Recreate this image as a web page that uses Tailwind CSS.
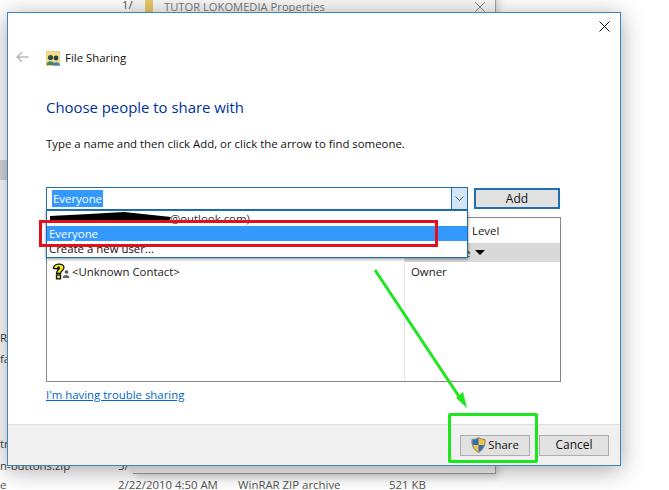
<!DOCTYPE html>
<html lang="en">
<head>
    <meta charset="UTF-8">
    <title>File Sharing</title>
    <script src="https://cdn.jsdelivr.net/npm/@tailwindcss/browser@4"></script>
</head>
<body class="bg-white">
<div class="relative w-[669px] h-[490px] overflow-hidden bg-white font-['Open_Sans','Noto_Sans',sans-serif] text-[11.4px] text-[#1a1a1a]">

    <!-- explorer behind -->
    <div class="absolute left-0 top-[160px] w-[7px] h-[20px] bg-[#d9d9d9]"></div>
    <span class="absolute left-[-3px] top-[329px] text-[#444]">.R</span>
    <span class="absolute left-0 top-[350px] text-[#444]">fa</span>
    <span class="absolute left-0 top-[435px] text-[#444]">tr</span>
    <span class="absolute left-0 top-[457px] text-[#444]">n-buttons.zip</span>
    <span class="absolute left-[118px] top-[457px] text-[#555]">3/</span>
    <span class="absolute left-0 top-[476px] text-[#555]">e</span>
    <span class="absolute left-[118px] top-[476px] text-[#555]">2/22/2010 4:50 AM</span>
    <span class="absolute left-[238px] top-[476px] text-[#555]">WinRAR ZIP archive</span>
    <span class="absolute left-[389px] top-[476px] text-[#555]">521 KB</span>
    <span class="absolute left-[122px] top-[-4px] text-[#555]">1/1</span>

    <!-- properties window behind -->
    <div class="absolute left-[133px] top-[-10px] w-[363px] h-[484px] bg-[#f6f6f6] border-r border-b border-[#a0a0a0] shadow-[2px_2px_8px_rgba(0,0,0,0.2)]">
        <div class="absolute left-[12px] top-[10px] w-[8px] h-[12px] bg-[#e8c766]"></div>
        <span class="absolute left-[31px] top-[9px] text-[#777] text-[11.2px]">TUTOR LOKOMEDIA Properties</span>
        <svg class="absolute left-[341px] top-[11px]" width="12" height="12" viewBox="0 0 12 12" fill="none" stroke="#888" stroke-width="1"><path d="M1 1l10 10M11 1L1 11"/></svg>
    </div>

    <!-- dialog -->
    <div class="absolute left-[7px] top-[12px] w-[614px] h-[454px] flex flex-col bg-white border border-[#3d85c0] shadow-[0_4px_22px_rgba(0,0,0,0.35)]">
        <div class="flex-1 relative px-[38px]">
            <svg class="absolute right-[10px] top-[8px]" width="11" height="11" viewBox="0 0 11 11" fill="none" stroke="#111" stroke-width="1"><path d="M0.5 0.5l10 10M10.5 0.5l-10 10"/></svg>
            <div class="flex items-center h-[20px] mt-[35px]">
                <svg class="absolute left-[8px] top-[38px]" width="13" height="12" viewBox="0 0 13 12" fill="none" stroke="#b9b9b9" stroke-width="1.6"><path d="M12.5 6H1.5M6 1.2L1.2 6 6 10.800"/></svg>
                <svg width="14" height="15" viewBox="0 0 14 15" class="mr-[5px]">
                    <rect width="14" height="15" fill="#f5dc8e" stroke="#d9bb62" stroke-width="0.6"/>
                    <circle cx="4.500" cy="6.500" r="2.600" fill="#2f4f3f"/>
                    <path d="M0.500 14c0-5 8-5 8 0z" fill="#3e8a67"/>
                    <circle cx="10" cy="7" r="2.400" fill="#263f47"/>
                    <path d="M6.500 14.500c0-4.500 7.500-4.500 7.500 0z" fill="#3f7fb5"/>
                </svg>
                <span class="text-[#111]">File Sharing</span>
            </div>
            <h1 class="mt-[29px] text-[14.9px] leading-[20px] text-[#003399]">Choose people to share with</h1>
            <p class="mt-[19px] leading-[16px] text-[#111]">Type a name and then click Add, or click the arrow to find someone.</p>

            <div class="flex mt-[35px] items-center">
                <div class="w-[422px] h-[23px] border border-[#1f6fb0] flex items-center pl-[5px] justify-between">
                    <span class="bg-[#3399ff] text-white leading-[17px] px-px">Everyone</span>
                    <span class="w-[16px] h-full bg-[#d4e6f5] border-l border-[#1f6fb0] flex items-center justify-center">
                        <svg width="9" height="6" viewBox="0 0 9 6" fill="none" stroke="#555" stroke-width="1"><path d="M0.500 0.500l4 4 4-4"/></svg>
                    </span>
                </div>
                <button class="ml-[6px] w-[86px] h-[21px] bg-[#e1e1e1] border-2 border-[#1f6fb0] text-[#111] text-[12px]">Add</button>
            </div>

            <div class="relative w-[515px] h-[165px] mt-[7px] border border-[#828790]">
                <div class="absolute left-[357px] top-0 bottom-0 w-px bg-[#e5e5e5]"></div>
                <div class="absolute left-[358px] right-0 top-[25px] h-[19px] bg-[#d9d9d9]"></div>
                <span class="absolute left-[425px] top-[4px]">Level</span>
                <span class="absolute left-[417px] top-[26px]">e</span>
                <span class="absolute left-[428px] top-[32px] w-0 h-0 border-x-[5px] border-x-transparent border-t-[5px] border-t-black"></span>
                <div class="absolute left-[5px] top-[45px] flex items-center">
                    <svg width="19" height="17" viewBox="0 0 19 17">
                        <path d="M1.500 5.500C1.500 0 12 -0.500 12 4.500 12 7.500 8.500 8 8.500 10.500H4.500C4.500 7 7.500 6.500 7.500 5 7.500 3.800 5.500 3.800 5.500 6z" fill="#f7ea1e" stroke="#111" stroke-width="1.300"/>
                        <rect x="4.500" y="12" width="4" height="3.800" fill="#f7ea1e" stroke="#111" stroke-width="1.300"/>
                        <circle cx="14.500" cy="9" r="1.800" fill="#555"/>
                        <path d="M10.500 15c0-4 7-4 7 0z" fill="#666"/>
                    </svg>
                    <span class="ml-[1px]">&lt;Unknown Contact&gt;</span>
                </div>
                <span class="absolute left-[364px] top-[45px]">Owner</span>
            </div>

            <a class="block mt-[5px] leading-[16px] text-[#0066cc] underline">I'm having trouble sharing</a>
        </div>

        <div class="h-[41px] bg-[#f0f0f0] border-t border-[#dfdfdf] flex items-center justify-end gap-[9px] pr-[11px]">
            <button class="w-[70px] h-[21px] bg-[#e1e1e1] border border-[#adadad] flex items-center justify-center gap-[2px] text-[#111] text-[11.4px]">
                <svg width="15" height="16" viewBox="0 0 15 16">
                    <path d="M7.500 0.500C9.500 2 11.500 2.500 14 2.500 14.500 9 12 13 7.500 15.500 3 13 .5 9 1 2.500 3.500 2.500 5.500 2 7.500 0.500z" fill="#f3c13a" stroke="#6d6d5e" stroke-width="0.8"/>
                    <path d="M7.500 1C5.500 2.300 3.500 2.800 1.500 3 1.400 5 1.500 6.500 2 8H7.500z" fill="#2a6fc0"/>
                    <path d="M7.500 8H13C12.300 11 10.500 13.500 7.500 15z" fill="#2a6fc0"/>
                </svg>
                Share
            </button>
            <button class="w-[70px] h-[21px] bg-[#e1e1e1] border border-[#adadad] text-[#111] text-[12px]">Cancel</button>
        </div>
    </div>

    <!-- dropdown list over the people list -->
    <div class="absolute left-[46px] top-[210px] w-[422px] h-[48px] bg-white border border-[#1f6fb0] shadow-[0_1px_3px_rgba(0,0,0,0.45)]">
        <div class="h-[15px] pl-[2px] leading-[15px] relative text-[#333]">
            <span class="ml-[121px]">@outlook.com)</span>
            <svg class="absolute left-[2px] top-0" width="125" height="13" viewBox="0 0 125 13"><path d="M1 5L40 3 75 1 122 6 120 10 76 10 70 11H5L1 9z" fill="#000"/></svg>
        </div>
        <div class="h-[15px] bg-[#3399ff] pl-[2px] leading-[15px] text-white">Everyone</div>
        <div class="h-[15px] pl-[2px] leading-[15px] text-[#111]">Create a new user...</div>
    </div>

    <!-- annotations -->
    <div class="absolute left-[39px] top-[220px] w-[399px] h-[27px] border-[3px] border-[#e2101a]"></div>
    <div class="absolute left-[448px] top-[413px] w-[90px] h-[50px] border-[3px] border-[#1ee61e] rounded-[2px]"></div>
    <svg class="absolute left-0 top-0 pointer-events-none" width="669" height="490" fill="none">
        <path d="M375 270L460 398" stroke="#1ee61e" stroke-width="3"/>
        <path d="M467 408L463 392 456 398z" fill="#1ee61e"/>
    </svg>
</div>
</body>
</html>
